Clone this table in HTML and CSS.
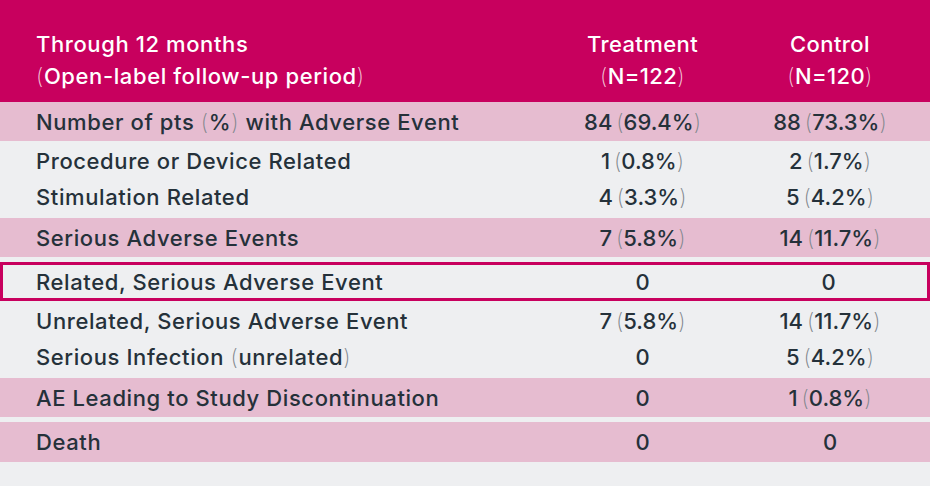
FILE: index.html
```html
<!DOCTYPE html>
<html lang="en">
<head>
<meta charset="utf-8">
<title>Adverse events through 12 months</title>
<link rel="stylesheet" href="styles.css">
</head>
<body>
<div class="table">
  <div class="row head">
    <div class="label">Through 12 months<br><span class="p">(</span>Open-label follow-up period<span class="p">)</span></div>
    <div class="val">Treatment<br><span class="p">(</span>N=122<span class="p">)</span></div>
    <div class="val">Control<br><span class="p">(</span>N=120<span class="p">)</span></div>
  </div>
  <div class="row hl">
    <div class="label">Number of pts <span class="p">(</span>%<span class="p">)</span> with Adverse Event</div>
    <div class="val">84 <span class="p">(</span>69.4%<span class="p">)</span></div>
    <div class="val">88 <span class="p">(</span>73.3%<span class="p">)</span></div>
  </div>
  <div class="group">
    <div class="row sub">
      <div class="label">Procedure or Device Related</div>
      <div class="val">1 <span class="p">(</span>0.8%<span class="p">)</span></div>
      <div class="val">2 <span class="p">(</span>1.7%<span class="p">)</span></div>
    </div>
    <div class="row sub">
      <div class="label">Stimulation Related</div>
      <div class="val">4 <span class="p">(</span>3.3%<span class="p">)</span></div>
      <div class="val">5 <span class="p">(</span>4.2%<span class="p">)</span></div>
    </div>
  </div>
  <div class="row hl">
    <div class="label">Serious Adverse Events</div>
    <div class="val">7 <span class="p">(</span>5.8%<span class="p">)</span></div>
    <div class="val">14 <span class="p">(</span>11.7%<span class="p">)</span></div>
  </div>
  <div class="row boxed">
    <div class="label">Related, Serious Adverse Event</div>
    <div class="val">0</div>
    <div class="val">0</div>
  </div>
  <div class="group">
    <div class="row sub">
      <div class="label">Unrelated, Serious Adverse Event</div>
      <div class="val">7 <span class="p">(</span>5.8%<span class="p">)</span></div>
      <div class="val">14 <span class="p">(</span>11.7%<span class="p">)</span></div>
    </div>
    <div class="row sub">
      <div class="label">Serious Infection <span class="p">(</span>unrelated<span class="p">)</span></div>
      <div class="val">0</div>
      <div class="val">5 <span class="p">(</span>4.2%<span class="p">)</span></div>
    </div>
  </div>
  <div class="row hl">
    <div class="label">AE Leading to Study Discontinuation</div>
    <div class="val">0</div>
    <div class="val">1 <span class="p">(</span>0.8%<span class="p">)</span></div>
  </div>
  <div class="row hl last">
    <div class="label">Death</div>
    <div class="val">0</div>
    <div class="val">0</div>
  </div>
</div>
</body>
</html>
```

FILE: styles.css
```css
html, body {
  margin: 0;
  padding: 0;
  background: #eeeff1;
}
body {
  width: 930px;
  height: 486px;
  overflow: hidden;
  font-family: "Inter", "DejaVu Sans", sans-serif;
  font-size: 22px;
  font-weight: 500;
  letter-spacing: 0.6px;
  color: #25313a;
}
.table {
  display: flex;
  flex-direction: column;
}
.row {
  display: grid;
  grid-template-columns: 555px 175px 200px;
  align-items: center;
}
.label {
  padding-left: 36px;
  white-space: nowrap;
}
.val {
  text-align: center;
  white-space: nowrap;
  letter-spacing: 0;
  word-spacing: -2px;
}
.p {
  font-weight: 200;
  color: #7d858b;
}
.head {
  background: #c8005e;
  color: #ffffff;
  height: 102px;
  box-sizing: border-box;
  padding: 28px 0 10px;
  line-height: 32px;
  align-items: start;
}
.head .val {
  letter-spacing: 0.4px;
}
.head .p {
  color: #f3c6d8;
}
.hl {
  background: #e6bcd0;
  height: 39px;
}
.group {
  padding: 2px 0 3px;
}
.sub {
  height: 36px;
}
.boxed {
  margin-top: 5px;
  height: 39px;
  box-sizing: border-box;
  border: 3px solid #c8005e;
  grid-template-columns: 552px 175px 197px;
}
.boxed .label {
  padding-left: 33px;
}
.last {
  margin-top: 5px;
  height: 40px;
}
```
